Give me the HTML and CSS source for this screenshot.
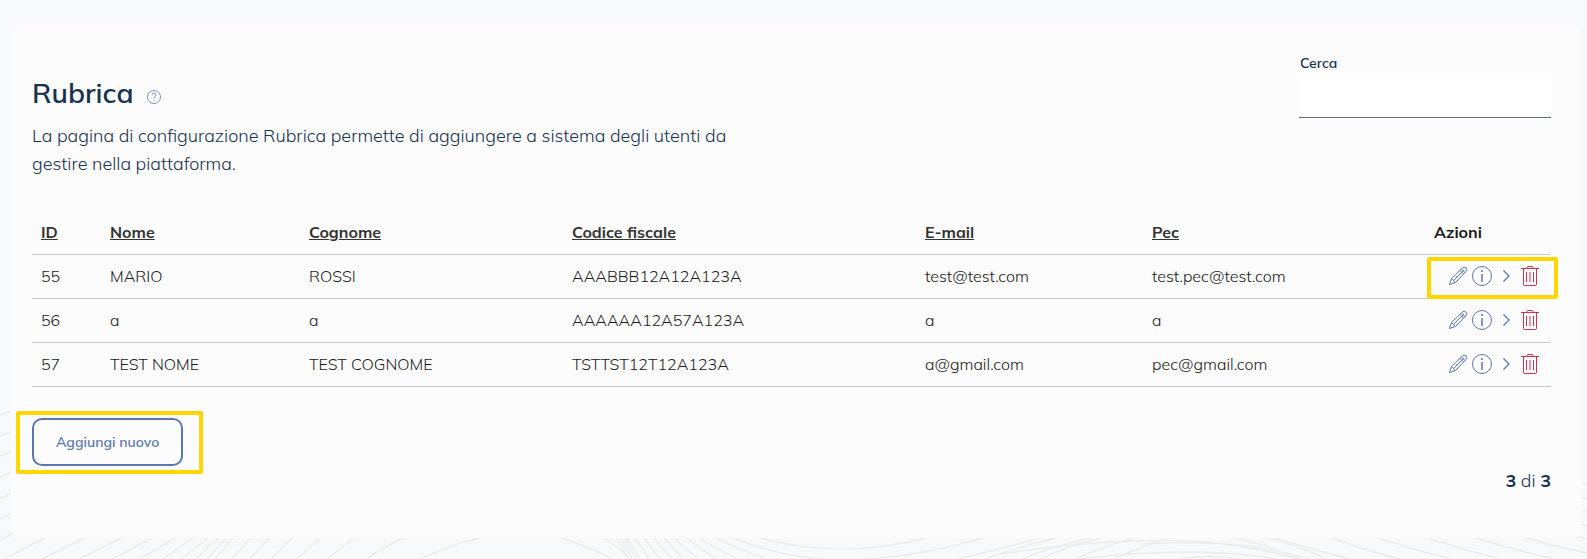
FILE: index.html
```
<!DOCTYPE html>
<html lang="it">

<head>
  <meta charset="UTF-8">
  <meta name="viewport" content="width=device-width, initial-scale=1.0">
  <title>Rubrica</title>
  <link rel="stylesheet" href="styles.css">
</head>

<body>
  <!-- decorative waves at the bottom of the page -->
  <svg class="waves" viewBox="0 0 1587 159" preserveAspectRatio="xMidYMax slice" aria-hidden="true">
    <path d="M0 15l14-5M0 36l14-5M0 56l14-6M0 77l14-6M0 98l14-6M0 119l14-7M0 140l14-7" />
    <path d="M4 159l41-21M42 159l42-21M79 159l42-21M112 159l40-21M140 159l35-21M163 159l30-21M181 159l27-21M196 159l22-21M207 159l19-21M215 159l18-21M232 159l18-21M250 159l19-21M271 159l21-21M297 159l23-21M327 159l27-21" />
    <path d="M366 159q18-12 37-21M421 159q28-14 59-21M561 138q28 9 52 21M605 138l22 17M617 138l11 21M621 138l11 21M625 138l11 21M627 138l13 21M635 138l14 21M644 138l16 21M654 138l18 21M664 138l19 21M674 138q12 11 24 21M687 138q14 11 29 21M700 138q18 12 37 21M716 138q24 12 50 21" />
    <path d="M734 138q50 21 108 22q70-1 141-22M760 138q82 22 166 0M957 159q42-9 82-21M985 159q36-13 71-21M1022 159q34-14 70-21M1041 159q28-14 60-21M1075 159q30-13 58-21M1114 159q26-12 53-21" />
    <path d="M1000 154q120-18 206-12q54 6 92 17M1080 159q60-8 120-7q50 2 76 7M1180 159q28-5 60 0M1140 144q60-3 110 2q34 6 60 13M1236 138q34 8 64 21M1268 138q32 8 58 21M1275 138q38 12 75 21M1331 138q34 12 68 21M1378 138q36 12 73 21M1427 138q36 12 73 21M1476 138q38 12 78 21M1526 138q30 9 61 15M1576 136l11 3M1580 82l7 2M1580 97l7 2M1580 111l7 1M1580 124l7 2" />
  </svg>

  <svg class="symbols" aria-hidden="true">
    <symbol id="pencil" viewBox="0 0 24 24">
      <path d="M3.500 20.500l2-6L16.500 4q2-1.500 3.500 0t0 3.500L9.500 18.500zM5.500 14.500l4 4M7.500 16.500L18 6M15.500 5l3.500 3.500M14 6.500l3.500 3.500" />
    </symbol>
    <symbol id="info" viewBox="0 0 24 24">
      <circle cx="12" cy="12" r="9.500" />
      <path d="M12 10v8M12 6v2" stroke-width="1.500" />
    </symbol>
    <symbol id="chevron" viewBox="0 0 24 24">
      <path d="M9.500 6.500l5.500 5.500-5.500 5.500" stroke-width="1.300" />
    </symbol>
    <symbol id="trash" viewBox="0 0 24 24">
      <path d="M3 4.500h18M9 4.500v-1q0-1 1-1h4q1 0 1 1v1M5.500 4.500v16q0 1 1 1h11q1 0 1-1v-16M8.500 8v10M12 8v10M15.500 8v10" />
    </symbol>
  </svg>

  <main class="panel">
    <header class="top">
      <div class="intro">
        <h1>Rubrica
          <button type="button" class="help" aria-label="Aiuto">
            <svg viewBox="0 0 16 16">
              <circle cx="8" cy="8" r="6.500" />
              <path d="M6 6q0-2 2-2t2 2q0 1-1 1.600t-1 1.900M8 11v1" />
            </svg>
          </button>
        </h1>
        <p>La pagina di configurazione Rubrica permette di aggiungere a sistema degli utenti da gestire nella piattaforma.</p>
      </div>
      <div class="search">
        <label for="cerca">Cerca</label>
        <input type="text" id="cerca" name="cerca">
      </div>
    </header>

    <table>
      <colgroup>
        <col class="col-id">
        <col class="col-nome">
        <col class="col-cognome">
        <col class="col-codice">
        <col class="col-email">
        <col class="col-pec">
        <col class="col-azioni">
      </colgroup>
      <thead>
        <tr>
          <th><a href="#id">ID</a></th>
          <th><a href="#nome">Nome</a></th>
          <th><a href="#cognome">Cognome</a></th>
          <th><a href="#codice">Codice fiscale</a></th>
          <th><a href="#email">E-mail</a></th>
          <th><a href="#pec">Pec</a></th>
          <th>Azioni</th>
        </tr>
      </thead>
      <tbody>
        <tr>
          <td>55</td>
          <td>MARIO</td>
          <td>ROSSI</td>
          <td>AAABBB12A12A123A</td>
          <td>test@test.com</td>
          <td>test.pec@test.com</td>
          <td>
            <div class="actions marked">
              <button type="button" aria-label="Modifica"><svg><use href="#pencil" /></svg></button>
              <button type="button" aria-label="Informazioni"><svg><use href="#info" /></svg></button>
              <button type="button" aria-label="Apri"><svg><use href="#chevron" /></svg></button>
              <button type="button" class="delete" aria-label="Elimina"><svg><use href="#trash" /></svg></button>
            </div>
          </td>
        </tr>
        <tr>
          <td>56</td>
          <td>a</td>
          <td>a</td>
          <td>AAAAAA12A57A123A</td>
          <td>a</td>
          <td>a</td>
          <td>
            <div class="actions">
              <button type="button" aria-label="Modifica"><svg><use href="#pencil" /></svg></button>
              <button type="button" aria-label="Informazioni"><svg><use href="#info" /></svg></button>
              <button type="button" aria-label="Apri"><svg><use href="#chevron" /></svg></button>
              <button type="button" class="delete" aria-label="Elimina"><svg><use href="#trash" /></svg></button>
            </div>
          </td>
        </tr>
        <tr>
          <td>57</td>
          <td>TEST NOME</td>
          <td>TEST COGNOME</td>
          <td>TSTTST12T12A123A</td>
          <td>a@gmail.com</td>
          <td>pec@gmail.com</td>
          <td>
            <div class="actions">
              <button type="button" aria-label="Modifica"><svg><use href="#pencil" /></svg></button>
              <button type="button" aria-label="Informazioni"><svg><use href="#info" /></svg></button>
              <button type="button" aria-label="Apri"><svg><use href="#chevron" /></svg></button>
              <button type="button" class="delete" aria-label="Elimina"><svg><use href="#trash" /></svg></button>
            </div>
          </td>
        </tr>
      </tbody>
    </table>

    <div class="add marked">
      <button type="button" class="btn-outline">Aggiungi nuovo</button>
    </div>
    <p class="count"><strong>3</strong> di <strong>3</strong></p>
  </main>
</body>

</html>
```
FILE: styles.css
```
* {
  box-sizing: border-box;
}

body {
  margin: 0;
  padding: 26px 5px 21px 11px;
  font-family: Mulish, Muli, Lato, "Open Sans", sans-serif;
  font-size: 18px;
  font-weight: 300;
  line-height: 28px;
  color: #17324d;
  background-color: #f8f9fb;
}

h1, p {
  margin: 0;
}

button {
  padding: 0;
  border: 0;
  background: none;
  font-family: inherit;
  color: #5b77ad;
  cursor: pointer;
}

svg {
  display: block;
  fill: none;
  stroke: currentColor;
}

.waves {
  position: absolute;
  left: 0;
  bottom: 0;
  width: 100%;
  height: 159px;
  color: #ececee;
  stroke-width: 1.500;
}

.symbols {
  position: absolute;
  width: 0;
  height: 0;
}

.panel {
  position: relative;
  padding: 28px 31px 43px 21px;
  border-radius: 8px;
  background-color: #fcfcfc;
}

.top {
  display: flex;
  justify-content: space-between;
  align-items: flex-start;
  margin-bottom: 32px;
}

.intro {
  max-width: 720px;
  padding-top: 21px;
}

h1 {
  display: flex;
  align-items: center;
  gap: 13px;
  margin-bottom: 11px;
  font-size: 28px;
  font-weight: 600;
  line-height: 36px;
}

.help {
  padding-top: 7px;
}

.help svg {
  width: 16px;
  height: 16px;
  stroke-width: 0.800;
}

.search {
  width: 252px;
}

label {
  display: block;
  padding-left: 1px;
  font-size: 14px;
  font-weight: 600;
  line-height: 19px;
}

input {
  display: block;
  width: 100%;
  height: 45px;
  padding: 0 8px;
  border: 0;
  border-bottom: 1px solid #5c6f82;
  background-color: #fff;
  font: inherit;
  color: inherit;
}

/* table */
table {
  width: 100%;
  table-layout: fixed;
  border-collapse: collapse;
  font-size: 16px;
  line-height: 24px;
  color: #1a1a1a;
}

th, td {
  height: 44px;
  padding: 0 9px;
  border-bottom: 1px solid #c5c7c9;
  text-align: left;
}

th {
  font-weight: 700;
}

th a {
  color: #333;
  text-decoration: underline;
}

.col-id { width: 69px; }
.col-nome { width: 199px; }
.col-cognome { width: 263px; }
.col-codice { width: 353px; }
.col-email { width: 227px; }
.col-pec { width: 282px; }
.col-azioni { width: 126px; }

.actions {
  position: relative;
  display: flex;
  justify-content: flex-end;
}

.actions svg {
  width: 24px;
  height: 24px;
}

.delete {
  color: #cc334d;
}

/* yellow highlight around the controls */
.marked::after {
  content: "";
  position: absolute;
  inset: -7px -16px -11px -7px;
  border: 4px solid #ffd700;
  border-radius: 2px;
  pointer-events: none;
}

.add {
  position: relative;
  width: fit-content;
  margin-top: 31px;
}

.add::after {
  inset: -7px -20px -8px -16px;
}

.btn-outline {
  display: block;
  height: 48px;
  padding: 0 22px;
  border: 2px solid #5b77ad;
  border-radius: 10px;
  font-size: 14px;
  font-weight: 600;
}

.count {
  margin-top: 1px;
  text-align: right;
}

strong {
  font-weight: 700;
}
```
